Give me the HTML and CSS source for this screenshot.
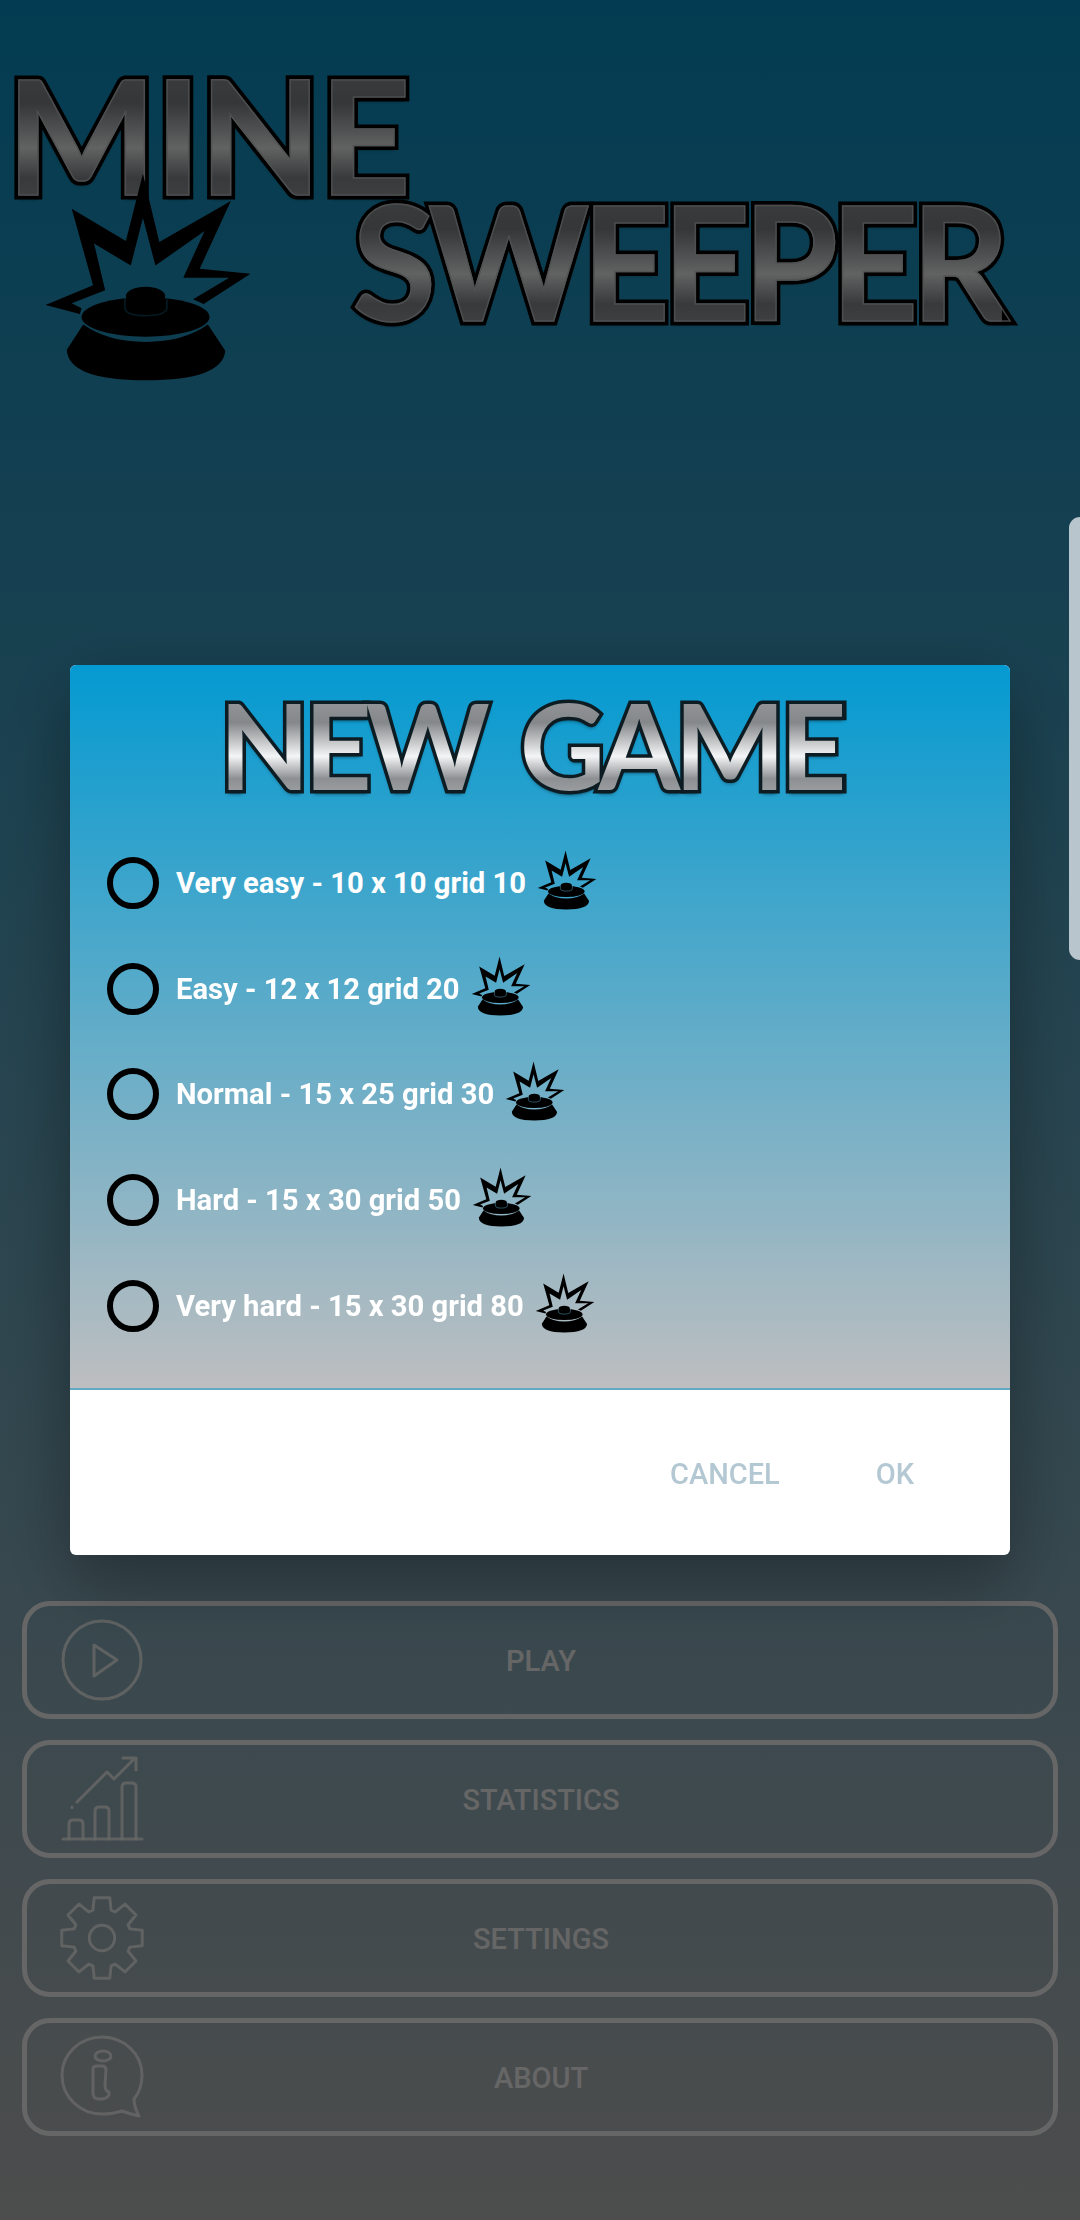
FILE: index.html
```html
<!DOCTYPE html>
<html lang="en">
<head>
  <meta charset="UTF-8" />
  <meta name="viewport" content="width=device-width, initial-scale=1.0" />
  <title>Minesweeper</title>
  <link rel="stylesheet" href="styles.css">
</head>
<body>
  <!-- Shared mine drawing, used by the logo and the difficulty rows -->
  <svg class="defs" width="0" height="0" aria-hidden="true">
    <symbol id="mine" viewBox="95 30 635 640">
      <path d="M397 35L447 243L665 118L570 325L725 340L582 432L550 418L660 352L520 352L585 210L435 315L397 170L360 315L248 248L282 390L180 430L210 445L205 463L100 435L245 375L180 142L345 240Z" />
      <ellipse cx="405" cy="472" rx="195" ry="60" />
      <path d="M215 495Q290 548 405 548Q520 548 595 495L648 575Q640 665 405 665Q170 665 165 572Z" />
      <path class="mine-line" d="M342 415L342 445Q345 468 405 468Q465 468 470 445L470 415" />
      <ellipse cx="405" cy="408" rx="60" ry="28" />
    </symbol>
  </svg>

  <main class="menu">
    <header class="logo">
      <div class="logo-line logo-line-mine">
        <span class="metal" data-text="MINE"><span class="metal-fill">MINE</span></span>
        <svg class="logo-mine"><use href="#mine" /></svg>
      </div>
      <div class="logo-line logo-line-sweeper">
        <span class="metal" data-text="SWEEPER"><span class="metal-fill">SWEEPER</span></span>
      </div>
    </header>

    <nav class="nav">
      <a class="nav-btn" href="#play">
        <svg class="nav-icon" viewBox="0 0 84 84">
          <circle cx="42" cy="42" r="39" />
          <path d="M34 27L57 42L34 58Z" />
        </svg>
        <span>PLAY</span>
      </a>
      <a class="nav-btn" href="#statistics">
        <svg class="nav-icon" viewBox="0 0 84 84">
          <path d="M3 82H82" />
          <path d="M9 82V67Q9 63 13 63H19Q23 63 23 67V82" />
          <path d="M35 82V54Q35 50 39 50H45Q49 50 49 54V82" />
          <path d="M62 82V30Q62 26 66 26H72Q76 26 76 30V82" />
          <path d="M17 45L47 15L54 22L75 1M63 1H76V13" />
          <path d="M12 50V50.5" />
        </svg>
        <span>STATISTICS</span>
      </a>
      <a class="nav-btn" href="#settings">
        <svg class="nav-icon" viewBox="-43 -43 86 86">
          <path d="M-9.3 -28.5L-8 -41.2H8L9.3 -28.5L13.6 -26.7L23.5 -34.8L34.8 -23.5L26.7 -13.6L28.5 -9.3L41.2 -8V8L28.5 9.3L26.7 13.6L34.8 23.5L23.5 34.8L13.6 26.7L9.3 28.5L8 41.2H-8L-9.3 28.5L-13.6 26.7L-23.5 34.8L-34.8 23.5L-26.7 13.6L-28.5 9.3L-41.2 8V-8L-28.5 -9.3L-26.7 -13.6L-34.8 -23.5L-23.5 -34.8L-13.6 -26.7Z" />
          <circle cx="0" cy="0" r="13" />
        </svg>
        <span>SETTINGS</span>
      </a>
      <a class="nav-btn" href="#about">
        <svg class="nav-icon" viewBox="0 0 84 84">
          <path d="M62 76Q53 79 42 79C20 79 2 62 2 40C2 19 20 2 42 2C64 2 82 19 82 40C82 49 79 58 74 64Q74 72 79 81Q70 79 62 76Z" />
          <ellipse cx="43" cy="21" rx="8" ry="5" />
          <path d="M33 34Q33 31 37 31H42Q46 31 46 35L45 50Q45 56 49 57Q50 63 42 64H39Q33 64 33 58Z" />
        </svg>
        <span>ABOUT</span>
      </a>
    </nav>
  </main>

  <!-- New game dialog on top of the dimmed menu -->
  <div class="scrim">
    <section class="dialog">
      <div class="dialog-body">
        <h2 class="dialog-title">
          <span class="metal metal-small" data-text="NEW GAME"><span class="metal-fill">NEW GAME</span></span>
        </h2>
        <ul class="levels">
          <li class="level"><span class="radio"></span><span>Very easy - 10 x 10 grid 10</span><svg class="level-mine"><use href="#mine" /></svg></li>
          <li class="level"><span class="radio"></span><span>Easy - 12 x 12 grid 20</span><svg class="level-mine"><use href="#mine" /></svg></li>
          <li class="level"><span class="radio"></span><span>Normal - 15 x 25 grid 30</span><svg class="level-mine"><use href="#mine" /></svg></li>
          <li class="level"><span class="radio"></span><span>Hard - 15 x 30 grid 50</span><svg class="level-mine"><use href="#mine" /></svg></li>
          <li class="level"><span class="radio"></span><span>Very hard - 15 x 30 grid 80</span><svg class="level-mine"><use href="#mine" /></svg></li>
        </ul>
      </div>
      <div class="dialog-actions">
        <button type="button">CANCEL</button>
        <button type="button">OK</button>
      </div>
    </section>
  </div>

  <div class="edge-handle"></div>
</body>
</html>
```

FILE: styles.css
```css
* {
  box-sizing: border-box;
}

html, body {
  margin: 0;
  padding: 0;
}

body {
  width: 1080px;
  height: 2220px;
  overflow: hidden;
  font-family: Roboto, "Liberation Sans", sans-serif;
  background: linear-gradient(180deg, #0896cd 0%, #c0c0c0 100%);
  color: #fff;
}

.defs {
  position: absolute;
}

.menu {
  height: 2220px;
  display: flex;
  flex-direction: column;
  justify-content: space-between;
  padding: 0 22px 84px;
}

/* Logo */
.logo {
  padding-top: 58px;
  margin-left: -22px;
}

.logo-line {
  position: relative;
  height: 126px;
  white-space: nowrap;
}

.logo-line-mine {
  padding-left: 6px;
}

.logo-line-mine .metal {
  letter-spacing: -3px;
}

.logo-line-sweeper {
  padding-left: 352px;
}

.logo-line-sweeper .metal {
  letter-spacing: -8px;
  transform: scaleX(0.96);
}

.logo-mine {
  position: absolute;
  left: 43px;
  top: 114px;
  width: 210px;
  height: 210px;
  --mine-line: #0b4258;
  fill: #000;
}

/* Chrome lettering: black outline behind, gradient fill in front */
.metal {
  position: relative;
  display: inline-block;
  font-family: Lato, sans-serif;
  font-weight: 700;
  font-size: 160px;
  line-height: 150px;
  transform-origin: left top;
}

.metal::before {
  content: attr(data-text);
  position: absolute;
  left: 0;
  top: 0;
  color: #000;
  -webkit-text-stroke: 9px #000;
  text-shadow: 0 3px 4px #00222f;
}

.metal-fill {
  position: relative;
  display: block;
  background: linear-gradient(180deg, #9a9c9e 0%, #85888b 30%, #f4f5f6 60%, #8d9093 80%, #a5a7a9 100%);
  -webkit-background-clip: text;
  background-clip: text;
  -webkit-text-fill-color: transparent;
  -webkit-text-stroke: 1.5px rgba(200, 203, 205, 0.8);
}

.metal-small {
  font-size: 118px;
  line-height: 112px;
  letter-spacing: -6px;
  word-spacing: 14px;
}

.metal-small::before {
  -webkit-text-stroke: 7px #0c1c22;
}

.metal-small .metal-fill {
  -webkit-text-stroke: 0;
}

/* Menu buttons */
.nav {
  display: flex;
  flex-direction: column;
  gap: 21px;
}

.nav-btn {
  position: relative;
  height: 118px;
  display: flex;
  align-items: center;
  justify-content: center;
  padding: 2px 0 0 2px;
  border: 5px solid #fff;
  border-radius: 28px;
  color: #fff;
  font-size: 29px;
  font-weight: 500;
  text-decoration: none;
}

.nav-icon {
  position: absolute;
  left: 33px;
  top: 50%;
  width: 84px;
  height: 84px;
  margin-top: -42px;
  overflow: visible;
  fill: none;
  stroke: #fff;
  stroke-opacity: 0.85;
  stroke-width: 3;
  stroke-linejoin: round;
  stroke-linecap: round;
}

/* Dialog */
.scrim {
  position: fixed;
  inset: 0;
  display: flex;
  align-items: center;
  justify-content: center;
  background: rgba(0, 0, 0, 0.6);
}

.dialog {
  width: 940px;
  height: 890px;
  display: flex;
  flex-direction: column;
  border-radius: 6px;
  overflow: hidden;
  box-shadow: 0 24px 70px rgba(0, 0, 0, 0.35);
  background: #fff;
}

.dialog-body {
  height: 725px;
  padding-bottom: 31px;
  background: linear-gradient(180deg, #049ad1 0%, #bdbec0 100%);
  border-bottom: 2px solid #62a9c4;
}

.dialog-title {
  height: 165px;
  margin: 0;
  padding: 24px 0 0 149px;
  white-space: nowrap;
}

.levels {
  list-style-type: none;
  margin: 0;
  padding: 0 0 0 37px;
}

.level {
  height: 105.75px;
  display: flex;
  align-items: center;
  font-size: 29.2px;
  font-weight: 700;
  white-space: nowrap;
}

.radio {
  width: 52px;
  height: 52px;
  margin-right: 17px;
  border: 6px solid #000;
  border-radius: 50%;
}

.level-mine {
  width: 60px;
  height: 60px;
  margin: 0 0 6px 11px;
  --mine-line: #5aa9c9;
  fill: #000;
}

.mine-line {
  fill: none;
  stroke: var(--mine-line);
  stroke-width: 5;
}

.dialog-actions {
  flex: 1;
  display: flex;
  align-items: center;
  justify-content: flex-end;
  gap: 96px;
  padding: 2px 96px 0 0;
}

.dialog-actions button {
  padding: 0;
  border: none;
  background: none;
  color: #b3c8d3;
  font-family: Roboto, sans-serif;
  font-size: 29px;
  font-weight: 500;
}

/* Side panel handle */
.edge-handle {
  position: fixed;
  right: 0;
  top: 517px;
  width: 11px;
  height: 443px;
  border-radius: 12px 0 0 12px;
  background: #b9c5cc;
}
```
